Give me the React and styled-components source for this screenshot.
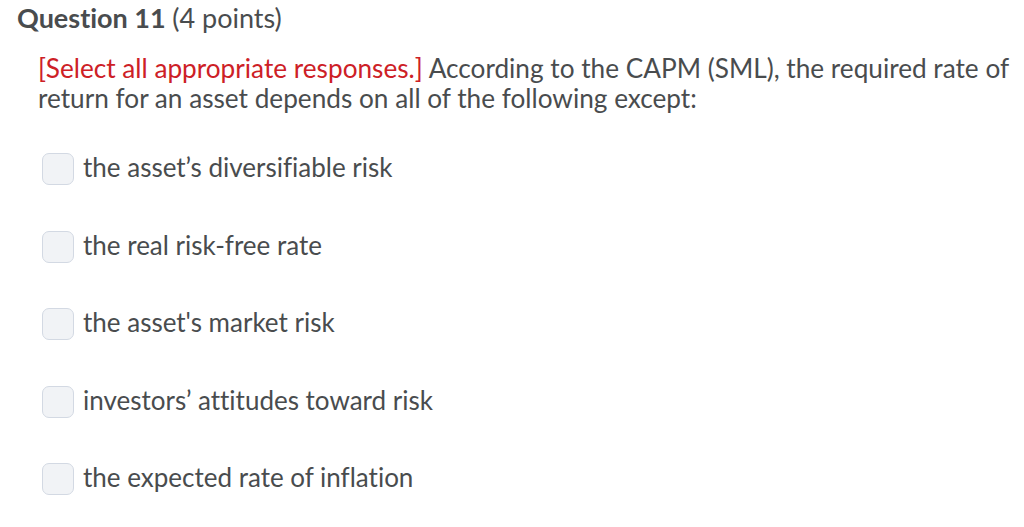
import React from "react";
import styled, { createGlobalStyle } from "styled-components";

const Global = createGlobalStyle`
  html, body { margin: 0; padding: 0; background: #ffffff; }
  body {
    font-family: Lato, "Noto Sans", sans-serif;
    color: #494c4e;
    font-variant-ligatures: none;
  }
`;

const Page = styled.div`
  padding: 2px 0 0 17px;
  width: 1024px;
  box-sizing: border-box;
`;

const Heading = styled.h2`
  margin: 0;
  font-size: 27px;
  line-height: 32px;
  font-weight: 700;
  color: #494c4e;
`;

const Points = styled.span`
  font-weight: 400;
`;

const Body = styled.div`
  padding: 19px 0 0 21px;
  width: 980px;
`;

const Prompt = styled.p`
  margin: 0;
  font-size: 26.2px;
  line-height: 30px;
  color: #494c4e;
`;

const Note = styled.span`
  color: #cd2026;
`;

const Options = styled.div`
  display: flex;
  flex-direction: column;
  gap: 45.5px;
  margin-top: 40px;
  padding-left: 4px;
`;

const Option = styled.label`
  display: flex;
  align-items: center;
  gap: 9px;
  height: 32px;
  font-size: 26px;
  color: #494c4e;
`;

const OptionText = styled.span`
  line-height: 29px;
  padding-bottom: 3px;
`;

const Box = styled.span`
  width: 30px;
  height: 30px;
  border: 1px solid #d3d9e3;
  border-radius: 7px;
  background: #f1f3f6;
  flex: none;
`;

const options = [
  "the asset\u2019s diversifiable risk",
  "the real risk-free rate",
  "the asset's market risk",
  "investors\u2019 attitudes toward risk",
  "the expected rate of inflation",
];

export default function App() {
  return (
    <>
      <Global />
      <Page>
        <Heading>
          Question 11 <Points>(4 points)</Points>
        </Heading>
        <Body>
          <Prompt>
            <Note>[Select all appropriate responses.]</Note> According to the CAPM (SML), the required rate of
            return for an asset depends on all of the following except:
          </Prompt>
          <Options>
            {options.map((o) => (
              <Option key={o}>
                <Box />
                <OptionText>{o}</OptionText>
              </Option>
            ))}
          </Options>
        </Body>
      </Page>
    </>
  );
}
